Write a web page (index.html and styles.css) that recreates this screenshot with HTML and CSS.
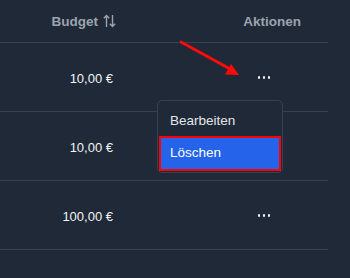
FILE: index.html
```html
<!DOCTYPE html>
<html lang="de">
<head>
<meta charset="utf-8">
<link rel="stylesheet" href="styles.css">
</head>
<body>
<div class="page">
  <div class="table">
    <div class="row head">
      <div class="cell amount-h">Budget
        <svg class="sort" width="13" height="14" viewBox="0 0 13 14"><path d="M3.5 13V1.5M0.8 4.2L3.5 1.5L6.2 4.2M9.5 1V12.5M6.8 9.8L9.5 12.5L12.2 9.8" fill="none" stroke="#9ca3af" stroke-width="1.4"/></svg>
      </div>
      <div class="cell actions-h">Aktionen</div>
    </div>
    <div class="row">
      <div class="cell amount">10,00 €</div>
      <div class="cell actions"><span class="dots"><i></i><i></i><i></i></span></div>
    </div>
    <div class="row">
      <div class="cell amount">10,00 €</div>
      <div class="cell actions"></div>
    </div>
    <div class="row">
      <div class="cell amount">100,00 €</div>
      <div class="cell actions"><span class="dots"><i></i><i></i><i></i></span></div>
    </div>
  </div>
  <div class="menu">
    <div class="item">Bearbeiten</div>
    <div class="item active">Löschen</div>
  </div>
  <svg class="arrow" width="70" height="45" viewBox="0 0 70 45"><line x1="1" y1="2" x2="52" y2="30" stroke="#ff0a0a" stroke-width="3" stroke-linecap="round"/><polygon points="59,35 45,34.5 51,24" fill="#ff0a0a"/></svg>
</div>
</body>
</html>
```
FILE: styles.css
```css
html, body {
  margin: 0;
  padding: 0;
  background: #1f2937;
}
body {
  width: 350px;
  height: 278px;
  overflow: hidden;
  font-family: "Liberation Sans", Arial, sans-serif;
}
.page {
  position: relative;
  width: 350px;
  height: 278px;
}
.table {
  width: 328px;
}
.row {
  display: grid;
  grid-template-columns: 128px 200px;
  height: 68px;
  border-bottom: 1px solid #374151;
  align-items: center;
}
.row.head {
  height: 42px;
}
.cell {
  font-size: 13px;
}
.amount-h, .actions-h {
  color: #9ca3af;
  font-weight: bold;
  font-size: 13.5px;
}
.amount-h {
  text-align: right;
  padding-right: 12px;
  display: flex;
  justify-content: flex-end;
  align-items: center;
  gap: 5px;
}
.actions-h {
  text-align: right;
  padding-right: 27px;
}
.amount {
  text-align: right;
  padding-right: 15px;
  color: #f3f4f6;
  padding-top: 2px;
}
.actions {
  display: flex;
  justify-content: flex-end;
  padding-right: 58px;
}
.dots {
  display: flex;
  gap: 2.3px;
  padding-top: 1px;
}
.dots i {
  width: 2.5px;
  height: 2.5px;
  background: #f3f4f6;
  border-radius: 50%;
}
.menu {
  position: absolute;
  left: 157px;
  top: 100px;
  width: 124px;
  padding: 0 0 1px 0;
  border: 1px solid #374151;
  border-radius: 5px;
  background: #1f2937;
}
.item {
  font-size: 13.5px;
  color: #e5e7eb;
  height: 31px;
  padding-top: 4px;
  line-height: 32px;
  padding-left: 12px;
}
.item.active {
  background: #2563eb;
  color: #ffffff;
  outline: 2px solid #ff0000;
  margin: 2px 3px 2px 3px;
  height: 31px;
  padding-top: 0;
  line-height: 30px;
  padding-left: 9px;
}
.arrow {
  position: absolute;
  left: 180px;
  top: 40px;
}
```
